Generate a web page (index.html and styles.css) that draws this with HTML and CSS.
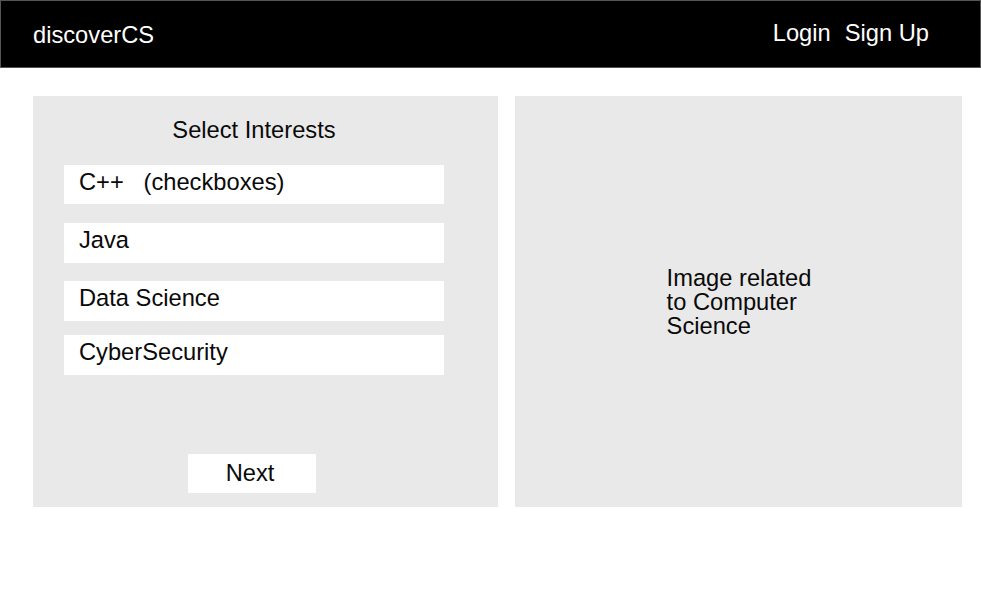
FILE: index.html
```html
<!DOCTYPE html>
<html>
<head>
<meta charset="utf-8">
<title>discoverCS</title>
<link rel="stylesheet" href="styles.css">
</head>
<body>
<header class="topbar">
  <div class="logo">discoverCS</div>
  <nav class="nav">
    <a class="nav-link" href="#">Login</a>
    <a class="nav-link" href="#">Sign Up</a>
  </nav>
</header>
<main class="main">
  <section class="panel interests">
    <h2 class="title">Select Interests</h2>
    <div class="option opt-1">C++   (checkboxes)</div>
    <div class="option opt-2">Java</div>
    <div class="option opt-3">Data Science</div>
    <div class="option opt-4">CyberSecurity</div>
    <button class="next">Next</button>
  </section>
  <section class="panel image">
    <div class="image-text">Image related<br>to Computer<br>Science</div>
  </section>
</main>
</body>
</html>
```
FILE: styles.css
```css
* { box-sizing: border-box; }
html, body { margin: 0; padding: 0; background: #fff; }
body {
  font-family: "Liberation Sans", Arial, Helvetica, sans-serif;
  color: #0a0a0a;
  font-size: 23.7px;
}
.topbar {
  height: 68px;
  background: #000;
  border: 1px solid #555;
  display: flex;
  align-items: center;
  justify-content: space-between;
  padding: 0 51px 0 32px;
  color: #fff;
}
.logo { line-height: 28px; margin-top: 2px; }
.nav { display: flex; gap: 14px; line-height: 28px; margin-bottom: 2px; }
.nav-link { color: #fff; text-decoration: none; }
.main {
  display: flex;
  gap: 17px;
  padding: 28px 0 0 33px;
}
.panel {
  background: #e9e9e9;
  height: 411px;
}
.interests {
  width: 465px;
  display: flex;
  flex-direction: column;
  padding: 20px 54px 14px 31px;
}
.title {
  margin: 0 0 21px;
  font-size: 23.7px;
  font-weight: normal;
  line-height: 28px;
  text-align: center;
}
.option {
  background: #fff;
  height: 40px;
  line-height: 34px;
  padding: 0 15px;
  white-space: pre;
}
.opt-1 { height: 39px; }
.opt-2 { margin-top: 19px; }
.opt-3 { margin-top: 18px; }
.opt-4 { margin-top: 14px; }
.next {
  margin: auto 0 0 124px;
  width: 128px;
  height: 39px;
  border: 0;
  background: #fff;
  font: inherit;
  color: #0a0a0a;
  line-height: 39px;
  padding: 0 4px 0 0;
}
.image {
  width: 447px;
  display: flex;
  align-items: center;
  justify-content: center;
}
.image-text {
  line-height: 24px;
  padding-left: 1px;
}
```
